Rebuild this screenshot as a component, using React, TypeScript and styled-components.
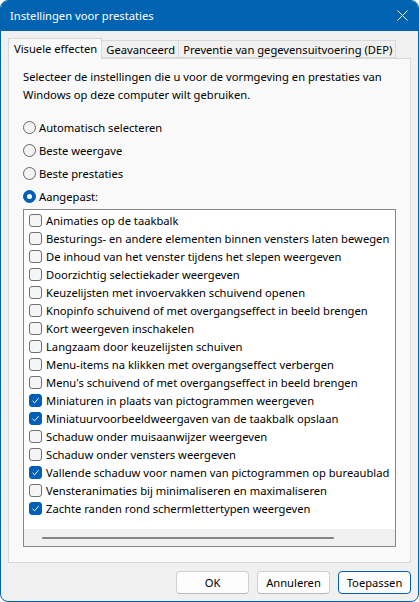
import styled, { createGlobalStyle } from "styled-components";

const GlobalStyle = createGlobalStyle`
	html, body {
		margin: 0;
		padding: 0;
		background: #ffffff;
	}
	* {
		box-sizing: border-box;
	}
`;

const accent = "#005fb8";

const Window = styled.div`
	width: 419px;
	height: 602px;
	display: flex;
	flex-direction: column;
	border: 1px solid #0063b1;
	border-radius: 8px;
	overflow: hidden;
	background: #f0f0f0;
	font-family: "Noto Sans", "Liberation Sans", sans-serif;
	font-size: 11.2px;
	color: #000;
`;

const TitleBar = styled.div`
	height: 30px;
	flex: none;
	display: flex;
	align-items: center;
	justify-content: space-between;
	padding: 0 10px 1px 9px;
	background: #0063b1;
	color: #fff;
`;

const CloseIcon = () => (
	<svg width="11" height="11" viewBox="0 0 11 11">
		<path d="M0.5 0.5 L10.5 10.5 M10.5 0.5 L0.5 10.5" stroke="#fff" strokeWidth="1" />
	</svg>
);

const Body = styled.div`
	flex: 1;
	display: flex;
	flex-direction: column;
	padding: 7px 7px 7px 7px;
`;

const TabRow = styled.div`
	display: flex;
	align-items: flex-end;
	height: 20px;
`;

const Tab = styled.div<{ $active?: boolean }>`
	position: relative;
	display: flex;
	align-items: center;
	height: ${(p) => (p.$active ? "21px" : "18px")};
	margin-bottom: ${(p) => (p.$active ? "-1px" : "0")};
	padding: ${(p) => (p.$active ? "0 4px 1px 5px" : "0 3px 0 4px")};
	border: 1px solid #d9d9d9;
	border-bottom: ${(p) => (p.$active ? "none" : "1px solid #d9d9d9")};
	margin-left: ${(p) => (p.$active ? "0" : "-1px")};
	background: ${(p) => (p.$active ? "#f9f9f9" : "#f0f0f0")};
	z-index: ${(p) => (p.$active ? 1 : 0)};
	white-space: nowrap;
`;

const Panel = styled.div`
	flex: 1;
	display: flex;
	flex-direction: column;
	border: 1px solid #d9d9d9;
	background: #f9f9f9;
	padding: 9px 14px 15px 14px;
`;

const Description = styled.p`
	margin: 0 0 12px 0;
	line-height: 18px;
`;

const RadioRow = styled.label`
	display: flex;
	align-items: center;
	gap: 3px;
	height: 23px;
`;

const RadioDot = styled.span<{ $checked?: boolean }>`
	width: 13px;
	height: 13px;
	border-radius: 50%;
	flex: none;
	display: flex;
	align-items: center;
	justify-content: center;
	border: 1px solid ${(p) => (p.$checked ? accent : "#666")};
	background: ${(p) => (p.$checked ? accent : "#f3f3f3")};

	&::after {
		content: "";
		display: ${(p) => (p.$checked ? "block" : "none")};
		width: 5px;
		height: 5px;
		border-radius: 50%;
		background: #fff;
	}
`;

const ListBox = styled.div`
	margin-top: 1px;
	flex: 1;
	display: flex;
	flex-direction: column;
	border: 1px solid #868686;
	background: #fff;
`;

const Items = styled.div`
	flex: 1;
	padding: 1px 0 0 5px;
	overflow: hidden;
`;

const ItemRow = styled.div`
	display: flex;
	align-items: center;
	gap: 4px;
	height: 18px;
	white-space: nowrap;
`;

const Box = styled.span<{ $checked?: boolean }>`
	width: 13px;
	height: 13px;
	flex: none;
	border-radius: 3px;
	display: flex;
	align-items: center;
	justify-content: center;
	border: 1px solid ${(p) => (p.$checked ? accent : "#707070")};
	background: ${(p) => (p.$checked ? accent : "#f5f5f5")};
`;

const CheckMark = () => (
	<svg width="9" height="9" viewBox="0 0 9 9">
		<path d="M1.5 4.8 L3.6 6.8 L7.6 2.2" fill="none" stroke="#fff" strokeWidth="1" />
	</svg>
);

const HScroll = styled.div`
	height: 17px;
	flex: none;
	display: flex;
	align-items: center;
	padding-left: 18px;
	background: #f0f0f0;
`;

const Thumb = styled.div`
	width: 292px;
	height: 2px;
	border-radius: 1px;
	background: #858585;
`;

const Footer = styled.div`
	display: flex;
	justify-content: flex-end;
	gap: 8px;
	padding-top: 8px;
`;

const Button = styled.button<{ $default?: boolean }>`
	width: 73px;
	height: 23px;
	padding: 0;
	font: inherit;
	color: #000;
	background: #fdfdfd;
	border-radius: 4px;
	border: 1px solid ${(p) => (p.$default ? accent : "#d0d0d0")};
	border-bottom-color: ${(p) => (p.$default ? accent : "#b8b8b8")};
`;

const radios = [
	{ label: "Automatisch selecteren", checked: false },
	{ label: "Beste weergave", checked: false },
	{ label: "Beste prestaties", checked: false },
	{ label: "Aangepast:", checked: true },
];

const effects: [string, boolean][] = [
	["Animaties op de taakbalk", false],
	["Besturings- en andere elementen binnen vensters laten bewegen", false],
	["De inhoud van het venster tijdens het slepen weergeven", false],
	["Doorzichtig selectiekader weergeven", false],
	["Keuzelijsten met invoervakken schuivend openen", false],
	["Knopinfo schuivend of met overgangseffect in beeld brengen", false],
	["Kort weergeven inschakelen", false],
	["Langzaam door keuzelijsten schuiven", false],
	["Menu-items na klikken met overgangseffect verbergen", false],
	["Menu's schuivend of met overgangseffect in beeld brengen", false],
	["Miniaturen in plaats van pictogrammen weergeven", true],
	["Miniatuurvoorbeeldweergaven van de taakbalk opslaan", true],
	["Schaduw onder muisaanwijzer weergeven", false],
	["Schaduw onder vensters weergeven", false],
	["Vallende schaduw voor namen van pictogrammen op bureaublad", true],
	["Vensteranimaties bij minimaliseren en maximaliseren", false],
	["Zachte randen rond schermlettertypen weergeven", true],
];

export default function App() {
	return (
		<>
			<GlobalStyle />
			<Window>
				<TitleBar>
					<span>Instellingen voor prestaties</span>
					<CloseIcon />
				</TitleBar>
				<Body>
					<TabRow>
						<Tab $active>Visuele effecten</Tab>
						<Tab>Geavanceerd</Tab>
						<Tab>Preventie van gegevensuitvoering (DEP)</Tab>
					</TabRow>
					<Panel>
						<Description>
							Selecteer de instellingen die u voor de vormgeving en prestaties van
							<br />
							Windows op deze computer wilt gebruiken.
						</Description>
						{radios.map((r) => (
							<RadioRow key={r.label}>
								<RadioDot $checked={r.checked} />
								{r.label}
							</RadioRow>
						))}
						<ListBox>
							<Items>
								{effects.map(([label, checked]) => (
									<ItemRow key={label}>
										<Box $checked={checked}>{checked && <CheckMark />}</Box>
										{label}
									</ItemRow>
								))}
							</Items>
							<HScroll>
								<Thumb />
							</HScroll>
						</ListBox>
					</Panel>
					<Footer>
						<Button>OK</Button>
						<Button>Annuleren</Button>
						<Button $default>Toepassen</Button>
					</Footer>
				</Body>
			</Window>
		</>
	);
}
